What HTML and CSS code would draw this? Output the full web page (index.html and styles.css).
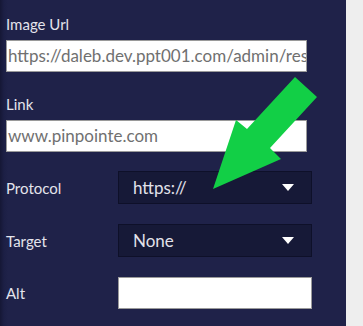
FILE: index.html
```html
<!DOCTYPE html>
<html>
<head>
<meta charset="utf-8">
<link rel="stylesheet" href="styles.css">
</head>
<body>
<div class="page">
  <div class="panel">
    <div class="field">
      <div class="label">Image Url</div>
      <div class="input">https://daleb.dev.ppt001.com/admin/res</div>
    </div>
    <div class="field">
      <div class="label">Link</div>
      <div class="input">www.pinpointe.com</div>
    </div>
    <div class="row">
      <div class="label">Protocol</div>
      <div class="select"><span>https://</span><span class="caret"></span></div>
    </div>
    <div class="row">
      <div class="label">Target</div>
      <div class="select"><span>None</span><span class="caret"></span></div>
    </div>
    <div class="row">
      <div class="label">Alt</div>
      <div class="input small"></div>
    </div>
    <svg class="arrow" width="363" height="326" viewBox="0 0 363 326">
      <polygon points="295,77 317,97 270,148 281,159 213,189 236,120 247,129" fill="#12cf46"/>
    </svg>
  </div>
  <div class="track"></div>
</div>
</body>
</html>
```
FILE: styles.css
```css
html, body {
  margin: 0;
  padding: 0;
}
body {
  width: 363px;
  height: 326px;
  overflow: hidden;
  font-family: Lato, "Open Sans", sans-serif;
}
.page {
  display: flex;
  height: 326px;
}
.panel {
  width: 346px;
  background: linear-gradient(to right, #151735 0px, #1c1f45 4px, #1f2249 8px);
  padding: 14px 0 0 6px;
  box-sizing: border-box;
  display: flex;
  flex-direction: column;
}
.track {
  flex: 1;
  background: #eeeeee;
}
.label {
  color: #e4e4ec;
  font-size: 15px;
  line-height: 20px;
}
.field {
  display: flex;
  flex-direction: column;
  gap: 6px;
  margin-bottom: 22px;
}
.field + .field {
  margin-bottom: 19px;
}
.input {
  width: 301px;
  height: 32px;
  box-sizing: border-box;
  background: #fff;
  border: 1px solid #9a9a9a;
  color: #707070;
  font-size: 17px;
  line-height: 30px;
  padding-left: 1px;
  white-space: nowrap;
  overflow: hidden;
}
.input.small {
  width: 194px;
}
.row {
  display: flex;
  align-items: center;
  margin-bottom: 20px;
}
.row .label {
  width: 112px;
}
.select {
  width: 194px;
  height: 33px;
  box-sizing: border-box;
  background: #161937;
  border: 1px solid #0e1029;
  color: #e2e2ea;
  font-size: 17px;
  display: flex;
  align-items: center;
  justify-content: space-between;
  padding: 0 17px 0 14px;
}
.caret {
  width: 0;
  height: 0;
  border-left: 6px solid transparent;
  border-right: 6px solid transparent;
  border-top: 7px solid #fff;
}
.arrow {
  position: absolute;
  left: 0;
  top: 0;
  pointer-events: none;
}
```
